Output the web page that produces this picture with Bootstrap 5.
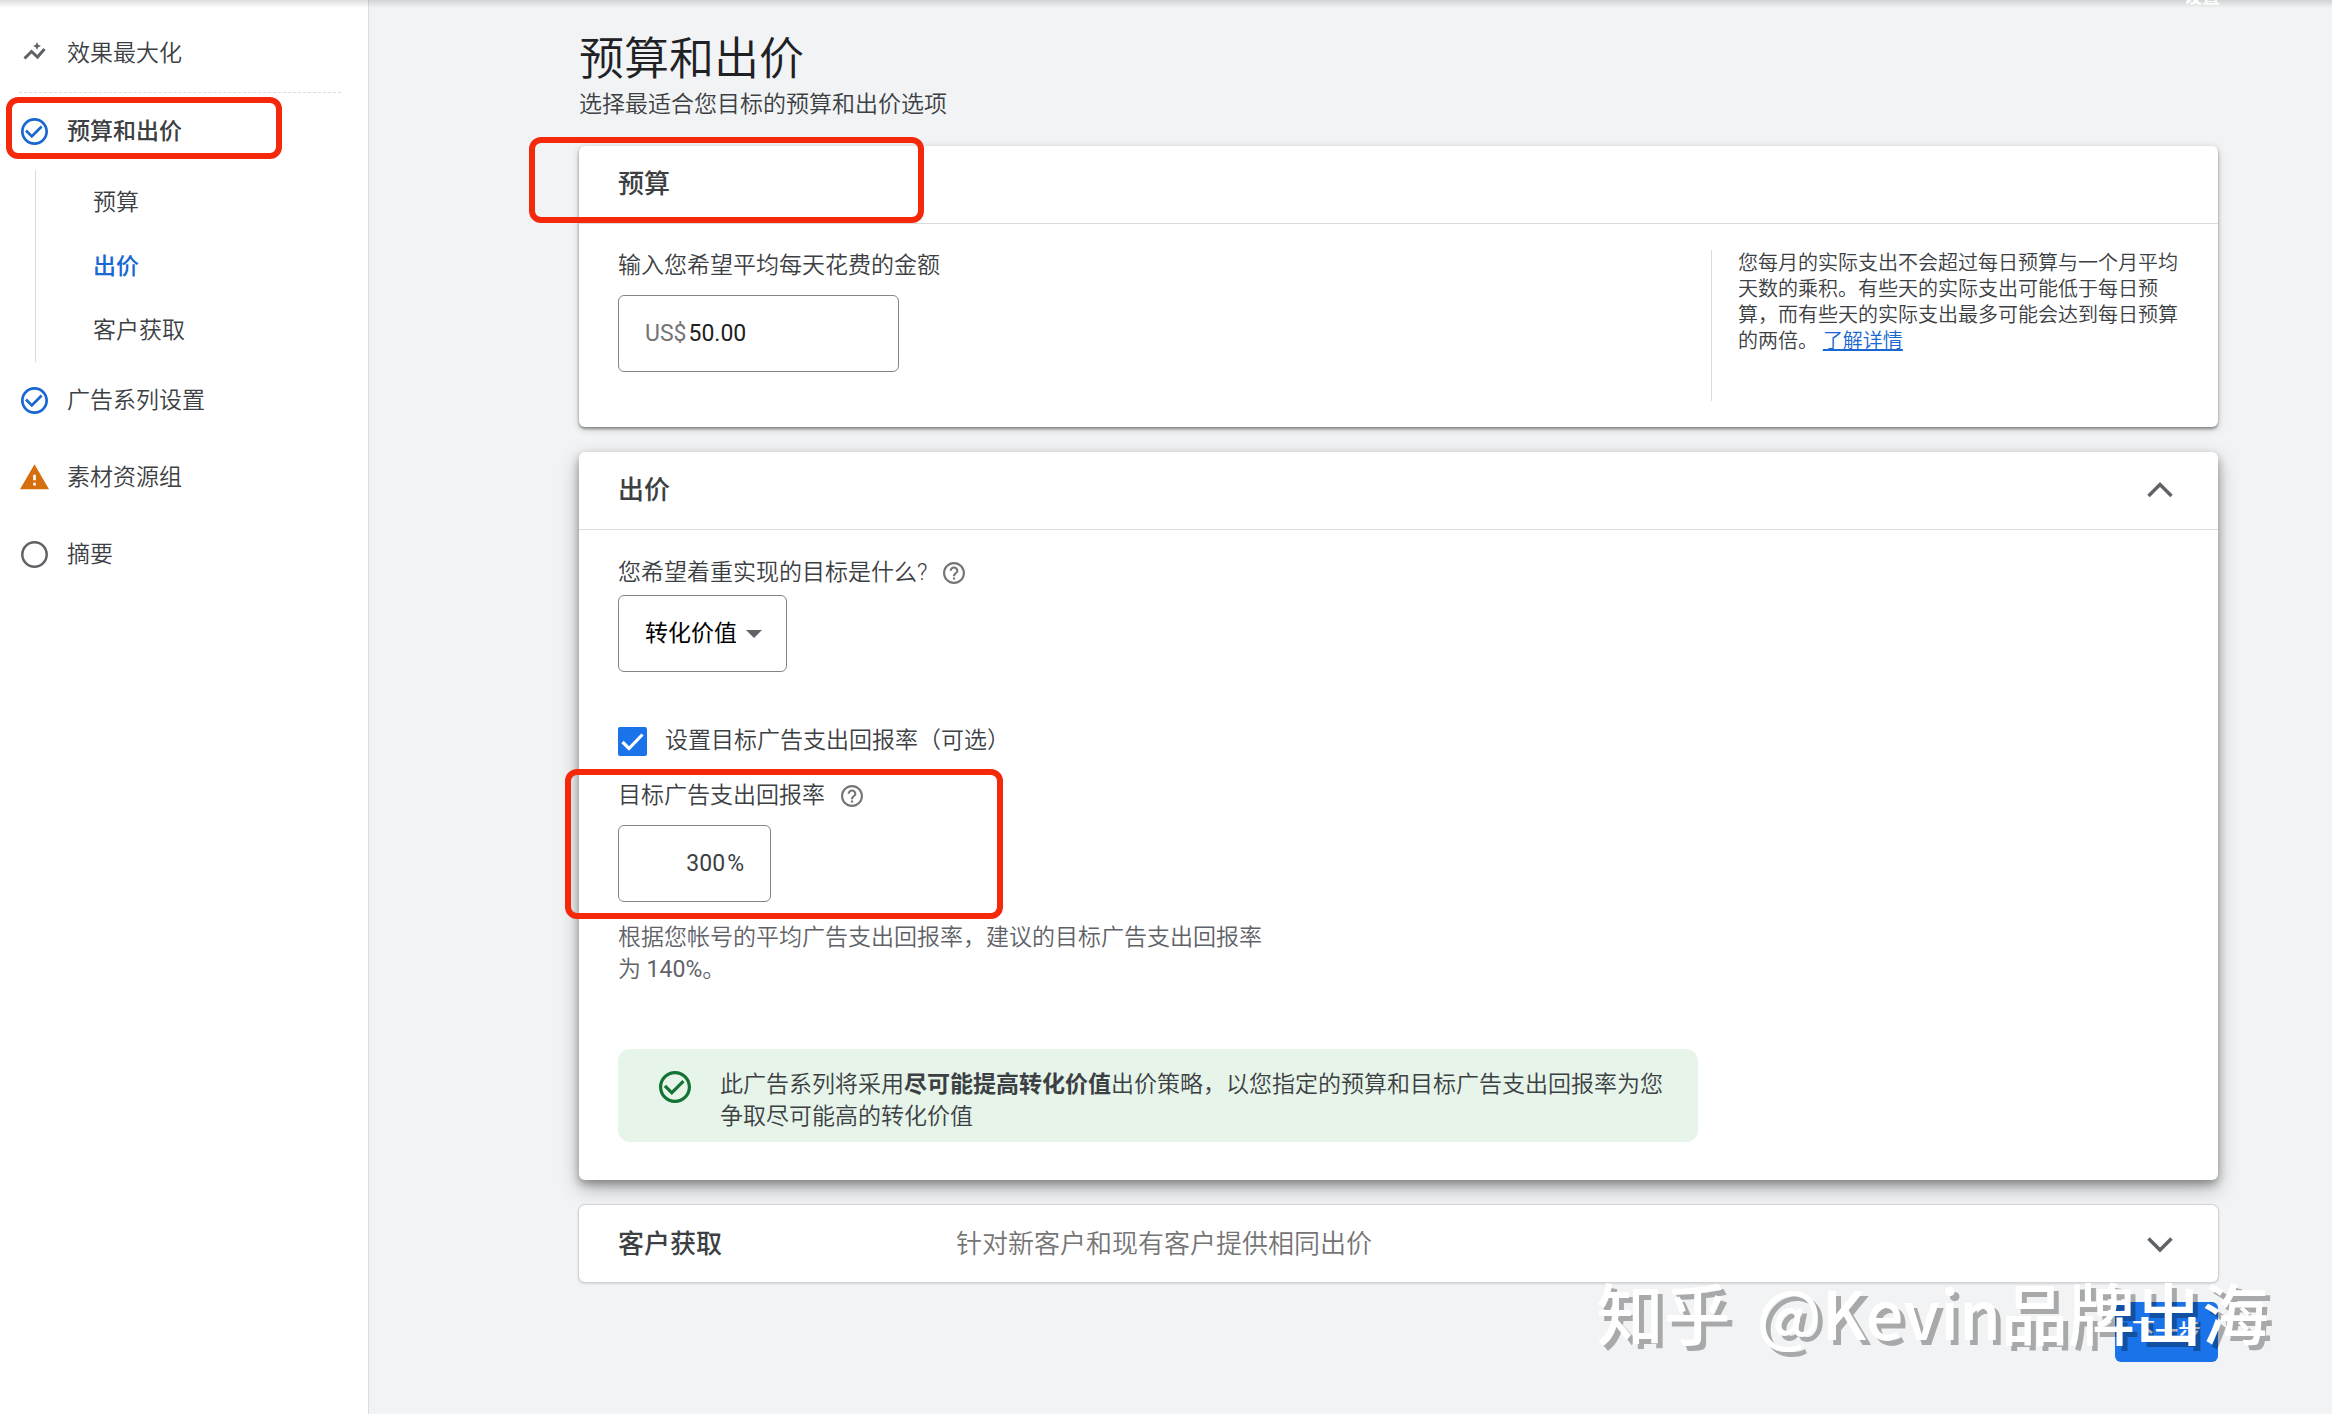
<!DOCTYPE html>
<html lang="zh-CN">
<head>
<meta charset="utf-8">
<meta name="viewport" content="width=device-width, initial-scale=1">
<title>预算和出价</title>
<link href="https://cdn.jsdelivr.net/npm/bootstrap@5.3.0/dist/css/bootstrap.min.css" rel="stylesheet">
<style>
:root{--ink:#3c4043;--soft:#5f6368;--blue:#1a73e8;--deep:#1967d2;--rule:#dadce0;--mark-red:#f4290b}
body{font-family:Roboto,"Noto Sans CJK SC",sans-serif;font-size:23px;line-height:32px;font-weight:350;color:var(--ink);background:#f1f3f4}
.top-shade{height:8px;background:linear-gradient(rgba(60,64,67,.18),rgba(60,64,67,0));overflow:hidden;z-index:5}
.top-shade span{right:112px;bottom:1px;font-size:18px;line-height:20px;font-weight:700}
.side{width:369px;border-right:1px solid var(--rule);padding-top:15px}
.side a{color:var(--ink);text-decoration:none}
.step{height:77px;padding-left:20px;gap:18px}
.step .ico{width:29px;height:29px}
.side .step-now,.side .sub-now{font-weight:500}
.step-rule{border-top:1px dashed var(--rule);margin:0 27px 0 19px}
.subs{margin-left:35px;border-left:1px solid var(--rule)}
.subs a{height:64px;padding:2px 0 0 57px}
.subs a.sub-now{color:var(--deep)}
.outline-note{position:absolute;border:6px solid var(--mark-red);border-radius:12px;pointer-events:none;z-index:4}
.note-step{left:6px;top:4px;width:276px;height:62px}
.note-budget{left:-50px;top:-9px;width:395px;height:86px}
.note-roas{left:-53px;top:-11px;width:438px;height:150px}
.main-col{padding:32px 114px 52px 210px}
.page-title{font-size:45px;line-height:56px;color:#202124;font-weight:350}
.lead-in{padding-top:1px}
.panel{background:#fff;border-radius:6px}
.panel-1{box-shadow:0 2px 3px rgba(0,0,0,.38),0 2px 8px rgba(0,0,0,.18)}
.panel-2{box-shadow:0 4px 8px rgba(0,0,0,.3),0 8px 20px rgba(0,0,0,.28)}
.panel-3{box-shadow:0 0 0 1px #d0d2d5,0 1px 3px rgba(0,0,0,.25);position:relative}
.panel-head{height:78px;padding:0 39px 2px;border-bottom:1px solid var(--rule)}
.panel-head h2{font-size:26px;line-height:32px;font-weight:500}
.panel-3 .panel-head{height:77px;border:0;padding-bottom:0}
.panel-3 h2{width:338px}
.panel-body{padding:26px 39px}
.bid-body{padding-top:27px;padding-bottom:38px}
.stack{gap:25px;margin-top:25px}
.aside-text{width:468px;min-height:151px;border-left:1px solid var(--rule);padding-left:26px;font-size:20px;line-height:26px}
.aside-text a{color:var(--deep)}
.boxed{height:77px;border:1px solid #80868b;border-radius:6px;padding:0 26px;background:#fff;font-weight:400}
.boxed input{border:0;background:none;padding:0;min-width:0;color:#202124;outline:0;font-weight:400}
.under-label{margin-top:13px}
.money{width:281px;gap:2px}
.money span{color:#757575}
.rate{width:153px;gap:2px}
.rate input{width:100%;text-align:right;color:var(--ink)}
.help{width:22px;height:22px;fill:#757575}
.goal{margin-top:6px}
.goal select{appearance:none;width:169px;color:#000;padding-right:50px}
.goal .caret{position:absolute;left:128px;top:35px;border:8px solid transparent;border-top-color:var(--soft);border-bottom:0;pointer-events:none}
.roas-row{margin-top:53px;gap:18px}
.roas-group{margin-top:23px}
.tick{width:29px;height:29px;margin:0;border:0;flex:none}
.form-check-input.tick[type=checkbox]{border-radius:2px}
.tick:checked{background-color:var(--blue);background-size:29px;background-image:url("data:image/svg+xml,%3csvg xmlns='http://www.w3.org/2000/svg' viewBox='0 0 29 29'%3e%3cpath d='M4.500 15l6.500 6.500L24.500 7.500' fill='none' stroke='white' stroke-width='3.200'/%3e%3c/svg%3e")}
.hint{color:var(--soft);max-width:660px;margin:20px 0 63px}
.hint span{font-weight:400}
.advice{background:#e6f4ea;border-radius:12px;padding:20px 30px 9px 41px;gap:29px;max-width:1080px}
.summary{font-size:26px;color:#757575}
.actions{margin-top:20px}
.next-btn{width:103px;height:60px;border-radius:6px;background:var(--blue);color:#fff;font-size:23px;font-weight:500;padding:0}
.stamp{position:absolute;right:-51px;bottom:1px;gap:26px;font-family:"Noto Sans CJK SC",sans-serif;font-size:67px;line-height:100px;font-weight:500;color:#fff;text-shadow:5px 5px 0 rgba(0,0,0,.3);white-space:nowrap;pointer-events:none}
.flip{fill:none;stroke:var(--soft);stroke-width:3.500}
</style>
<script src="https://cdn.jsdelivr.net/npm/bootstrap@5.3.0/dist/js/bootstrap.bundle.min.js"></script>
</head>
<body>
<svg class="d-none" aria-hidden="true">
  <symbol id="i-help" viewBox="2 2 20 20"><path d="M11 18h2v-2h-2v2zm1-16C6.480 2 2 6.480 2 12s4.480 10 10 10 10-4.480 10-10S17.520 2 12 2zm0 18c-4.410 0-8-3.590-8-8s3.590-8 8-8 8 3.590 8 8-3.590 8-8 8zm0-14c-2.210 0-4 1.790-4 4h2c0-1.100.9-2 2-2s2 .9 2 2c0 2-3 1.750-3 5h2c0-2.250 3-2.500 3-5 0-2.210-1.790-4-4-4z"/></symbol>
  <symbol id="i-check" viewBox="2 2 20 20"><path d="M16.590 7.580L10 14.170l-3.590-3.580L5 12l5 5 8-8zM12 2C6.480 2 2 6.480 2 12s4.480 10 10 10 10-4.480 10-10S17.520 2 12 2zm0 18c-4.420 0-8-3.580-8-8s3.580-8 8-8 8 3.580 8 8-3.580 8-8 8z"/></symbol>
</svg>

<div class="top-shade position-absolute top-0 start-0 w-100 text-white"><span class="position-absolute">设置</span></div>

<div class="d-flex min-vh-100">
  <nav class="side bg-white flex-shrink-0" aria-label="步骤">
    <a href="#" class="step d-flex align-items-center">
      <svg class="ico" viewBox="0 0 29 29"><path d="M4.500 19.500l7-7 6 5.500 7-8" fill="none" stroke="#5f6368" stroke-width="3"/><path d="M17 3l1.200 2.800L21 7l-2.800 1.200L17 11l-1.200-2.800L13 7l2.800-1.200z" fill="#5f6368"/></svg>
      效果最大化
    </a>
    <div class="step-rule"></div>
    <a href="#" class="step step-now d-flex align-items-center position-relative">
      <svg class="ico" fill="#1967d2"><use href="#i-check" x="1" y="1" width="27" height="27"/></svg>
      预算和出价
      <span class="outline-note note-step"></span>
    </a>
    <div class="subs d-flex flex-column">
      <a href="#" class="d-flex align-items-center">预算</a>
      <a href="#" class="sub-now d-flex align-items-center">出价</a>
      <a href="#" class="d-flex align-items-center">客户获取</a>
    </div>
    <a href="#" class="step d-flex align-items-center">
      <svg class="ico" fill="#1967d2"><use href="#i-check" x="1" y="1" width="27" height="27"/></svg>
      广告系列设置
    </a>
    <a href="#" class="step d-flex align-items-center">
      <svg class="ico" viewBox="1 1 22 22" fill="#d56e0c"><path d="M1 21h22L12 2 1 21zm12-3h-2v-2h2v2zm0-4h-2v-4h2v4z"/></svg>
      素材资源组
    </a>
    <a href="#" class="step d-flex align-items-center">
      <svg class="ico" viewBox="0 0 29 29"><circle cx="14.500" cy="14.500" r="12.200" fill="none" stroke="#5f6368" stroke-width="2.500"/></svg>
      摘要
    </a>
  </nav>

  <main class="main-col flex-grow-1">
    <h1 class="page-title m-0">预算和出价</h1>
    <p class="lead-in mb-0">选择最适合您目标的预算和出价选项</p>

    <div class="stack d-flex flex-column">
      <section class="panel panel-1">
        <div class="panel-head d-flex align-items-center position-relative">
          <h2 class="m-0">预算</h2>
          <span class="outline-note note-budget"></span>
        </div>
        <div class="panel-body d-flex justify-content-between">
          <div>
            <label for="budget" class="d-block">输入您希望平均每天花费的金额</label>
            <div class="boxed money under-label d-flex align-items-center">
              <span>US$</span>
              <input id="budget" type="text" class="flex-grow-1" value="50.00">
            </div>
          </div>
          <div class="aside-text">您每月的实际支出不会超过每日预算与一个月平均天数的乘积。有些天的实际支出可能低于每日预算，而有些天的实际支出最多可能会达到每日预算的两倍。 <a href="#">了解详情</a></div>
        </div>
      </section>

      <section class="panel panel-2">
        <div class="panel-head d-flex align-items-center justify-content-between">
          <h2 class="m-0">出价</h2>
          <button type="button" class="btn border-0 p-0 d-flex" aria-label="收起"><svg class="flip me-1" width="30" height="30" viewBox="0 0 30 30"><path d="M3.500 21L15 9.500 26.500 21"/></svg></button>
        </div>
        <div class="panel-body bid-body">
          <div class="d-flex align-items-center">
            <label for="goal">您希望着重实现的目标是什么?</label>
            <svg class="help ms-3"><use href="#i-help"/></svg>
          </div>
          <div class="goal position-relative">
            <select id="goal" class="boxed d-block"><option>转化价值</option></select>
            <span class="caret"></span>
          </div>
          <div class="roas-row d-flex align-items-center">
            <input id="roas-on" type="checkbox" class="form-check-input tick" checked>
            <label for="roas-on">设置目标广告支出回报率（可选）</label>
          </div>
          <div class="roas-group position-relative">
            <div class="d-flex align-items-center">
              <label for="roas">目标广告支出回报率</label>
              <svg class="help ms-3"><use href="#i-help"/></svg>
            </div>
            <div class="boxed rate under-label d-flex align-items-center">
              <input id="roas" type="text" value="300"><span>%</span>
            </div>
            <span class="outline-note note-roas"></span>
          </div>
          <p class="hint">根据您帐号的平均广告支出回报率，建议的目标广告支出回报率为 <span>140%</span>。</p>
          <div class="advice d-flex">
            <svg class="flex-shrink-0" width="32" height="36" fill="#137333"><use href="#i-check" y="2" width="32" height="32"/></svg>
            <div>此广告系列将采用<b>尽可能提高转化价值</b>出价策略，以您指定的预算和目标广告支出回报率为您争取尽可能高的转化价值</div>
          </div>
        </div>
      </section>

      <section class="panel panel-3">
        <div class="panel-head d-flex align-items-center">
          <h2 class="m-0">客户获取</h2>
          <span class="summary">针对新客户和现有客户提供相同出价</span>
          <button type="button" class="btn border-0 p-0 d-flex ms-auto" aria-label="展开"><svg class="flip me-1" width="30" height="30" viewBox="0 0 30 30"><path d="M3.500 9.500L15 21 26.500 9.500"/></svg></button>
        </div>
      </section>
    </div>

    <div class="actions position-relative d-flex justify-content-end">
      <button type="button" class="btn next-btn">下一步</button>
      <div class="stamp d-flex"><span>知乎</span><span>@Kevin品牌出海</span></div>
    </div>
  </main>
</div>
</body>
</html>
